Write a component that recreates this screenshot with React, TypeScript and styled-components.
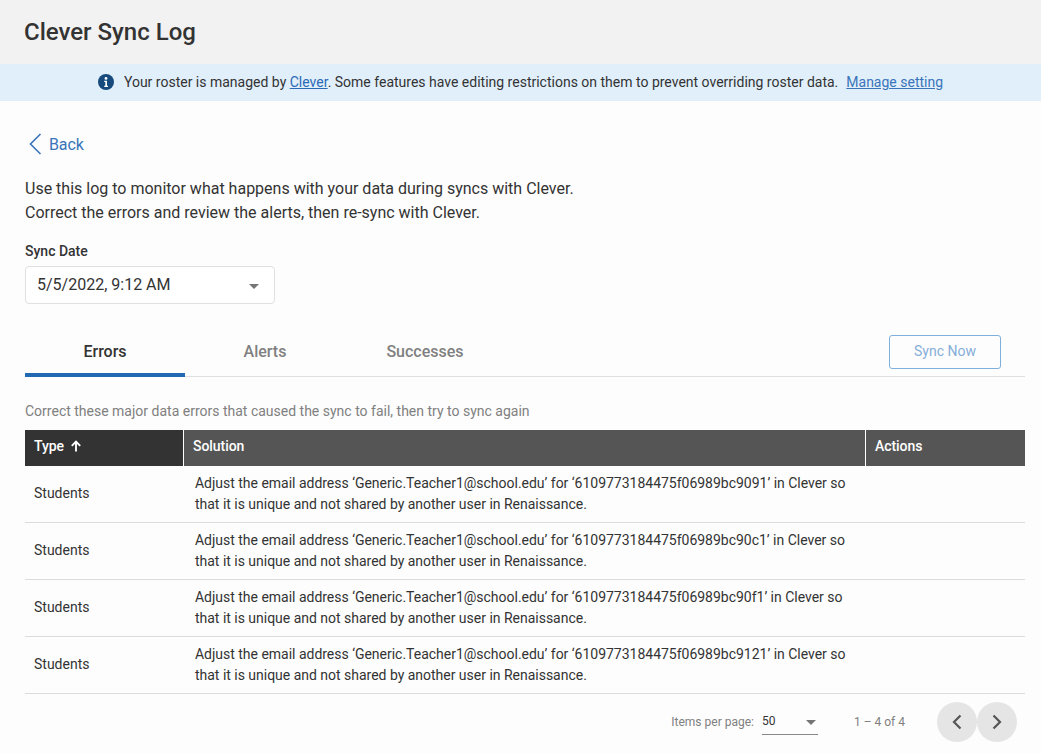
import styled, { createGlobalStyle } from "styled-components";

const GlobalStyle = createGlobalStyle`
  html, body {
    margin: 0;
    padding: 0;
    background: #fdfdfd;
    font-family: Roboto, "Liberation Sans", sans-serif;
    color: #333;
  }
`;

const rows = [
  "6109773184475f06989bc9091",
  "6109773184475f06989bc90c1",
  "6109773184475f06989bc90f1",
  "6109773184475f06989bc9121",
];

const tabs = ["Errors", "Alerts", "Successes"];

const App = () => {
  return (
    <Page>
      <GlobalStyle />
      <Header>
        <Title>Clever Sync Log</Title>
      </Header>
      <Banner>
        <svg width="16" height="16" viewBox="0 0 16 16">
          <circle cx="8" cy="8" r="8" fill="#174a7c" />
          <circle cx="8" cy="4.4" r="1.4" fill="#fff" />
          <path d="M6.2 6.8H9v5h1v1.2H6.2v-1.2h1.1V8H6.2z" fill="#fff" />
        </svg>
        <BannerText>
          Your roster is managed by <a href="#clever">Clever</a>. Some features have editing
          restrictions on them to prevent overriding roster data.
        </BannerText>
        <ManageLink href="#manage">Manage setting</ManageLink>
      </Banner>
      <Content>
        <BackLink href="#back">
          <svg width="14" height="22" viewBox="0 0 14 22" fill="none">
            <path d="M12.5 1 2.5 11l10 10" stroke="#3a74ba" strokeWidth="1.6" />
          </svg>
          Back
        </BackLink>
        <Intro>
          Use this log to monitor what happens with your data during syncs with Clever.
          <br />
          Correct the errors and review the alerts, then re-sync with Clever.
        </Intro>
        <FieldLabel>Sync Date</FieldLabel>
        <Select>
          <SelectValue>5/5/2022, 9:12 AM</SelectValue>
          <Caret />
        </Select>
        <TabBar>
          {tabs.map((tab, index) => (
            <Tab key={tab} $active={index === 0}>
              {tab}
            </Tab>
          ))}
          <SyncButton>Sync Now</SyncButton>
        </TabBar>
        <Caption>Correct these major data errors that caused the sync to fail, then try to sync again</Caption>
        <Table>
          <HeadRow>
            <HeadCell $sorted>
              Type
              <svg width="12" height="12" viewBox="0 0 12 12" fill="none">
                <path d="M6 11.5V2M1.8 5.8 6 1.5l4.2 4.3" stroke="#fff" strokeWidth="1.9" />
              </svg>
            </HeadCell>
            <HeadCell>Solution</HeadCell>
            <HeadCell>Actions</HeadCell>
          </HeadRow>
          {rows.map((id) => (
            <Row key={id}>
              <TypeCell>Students</TypeCell>
              <SolutionCell>
                Adjust the email address ‘Generic.Teacher1@school.edu’ for ‘{id}’ in Clever so
                <br />
                that it is unique and not shared by another user in Renaissance.
              </SolutionCell>
              <div />
            </Row>
          ))}
        </Table>
        <Pagination>
          <PerPageLabel>Items per page:</PerPageLabel>
          <PerPageSelect>
            50
            <Caret />
          </PerPageSelect>
          <Range>1 – 4 of 4</Range>
          <PageButtons>
            <PageButton aria-label="Previous page">
              <svg width="12" height="16" viewBox="0 0 12 16" fill="none">
                <path d="M9.5 1.5 3 8l6.5 6.5" stroke="#555" strokeWidth="2.2" />
              </svg>
            </PageButton>
            <PageButton aria-label="Next page">
              <svg width="12" height="16" viewBox="0 0 12 16" fill="none">
                <path d="M2.5 1.5 9 8l-6.5 6.5" stroke="#555" strokeWidth="2.2" />
              </svg>
            </PageButton>
          </PageButtons>
        </Pagination>
      </Content>
    </Page>
  );
};

export default App;

const Page = styled.div`
  width: 1041px;
  height: 753px;
  overflow: hidden;
  background: #fdfdfd;
`;

const Header = styled.header`
  display: flex;
  align-items: center;
  height: 64px;
  padding-left: 24px;
  background: #f2f2f2;
`;

const Title = styled.h1`
  margin: 0;
  font-size: 24px;
  font-weight: 500;
  color: #333;
`;

const Banner = styled.div`
  box-sizing: border-box;
  display: flex;
  align-items: center;
  justify-content: center;
  height: 37px;
  padding-bottom: 1px;
  background: #e1effb;
  font-size: 14px;

  svg {
    margin-right: 10px;
  }
`;

const BannerText = styled.span`
  color: #333;

  a {
    color: #2a6ab5;
  }
`;

const ManageLink = styled.a`
  margin-left: 8px;
  color: #3a74ba;
`;

const Content = styled.main`
  padding: 29px 16px 0 25px;
`;

const BackLink = styled.a`
  display: flex;
  align-items: center;
  gap: 7px;
  height: 28px;
  padding-left: 3px;
  color: #3a74ba;
  font-size: 16px;
  letter-spacing: -0.1px;
  text-decoration: none;
`;

const Intro = styled.p`
  margin: 19px 0 0;
  font-size: 16px;
  line-height: 24px;
  color: #333;
`;

const FieldLabel = styled.div`
  margin-top: 16px;
  font-size: 14px;
  line-height: 20px;
  font-weight: 500;
  color: #333;
`;

const Select = styled.div`
  box-sizing: border-box;
  display: flex;
  align-items: center;
  justify-content: space-between;
  width: 250px;
  height: 38px;
  margin-top: 5px;
  padding: 0 15px 0 11px;
  border: 1px solid #e0e0e0;
  border-radius: 4px;
  background: #fff;
  font-size: 16px;
  color: #333;
`;

const SelectValue = styled.span`
  margin-bottom: 2px;
`;

const Caret = styled.span`
  width: 0;
  height: 0;
  margin-top: 3px;
  border-left: 5px solid transparent;
  border-right: 5px solid transparent;
  border-top: 5px solid #757575;
`;

const TabBar = styled.div`
  display: flex;
  align-items: stretch;
  height: 72px;
  border-bottom: 1px solid #e0e0e0;
`;

const Tab = styled.div<{ $active?: boolean }>`
  box-sizing: border-box;
  display: flex;
  align-items: flex-end;
  justify-content: center;
  width: 160px;
  padding-bottom: 12px;
  margin-bottom: -1px;
  border-bottom: 4px solid ${({ $active }) => ($active ? "#2269b3" : "transparent")};
  font-size: 16px;
  font-weight: 500;
  color: ${({ $active }) => ($active ? "#333" : "#808080")};
`;

const SyncButton = styled.button`
  align-self: flex-end;
  width: 112px;
  height: 34px;
  margin: 0 24px 7px auto;
  border: 1px solid #7fb0dc;
  border-radius: 3px;
  background: transparent;
  padding: 0 0 3px;
  font-family: inherit;
  font-size: 14px;
  color: #85aed8;
`;

const Caption = styled.p`
  margin: 25px 0 0;
  font-size: 14px;
  line-height: 18px;
  color: #808080;
`;

const Table = styled.div`
  margin-top: 10px;
`;

const HeadRow = styled.div`
  display: grid;
  grid-template-columns: 159px 682px 159px;
  height: 36px;
  background: #555;
`;

const HeadCell = styled.div<{ $sorted?: boolean }>`
  box-sizing: border-box;
  display: flex;
  align-items: center;
  gap: 6px;
  padding: 0 0 4px 9px;
  border-right: 1px solid #fff;
  background: ${({ $sorted }) => ($sorted ? "#333" : "#555")};
  font-size: 14px;
  font-weight: 500;
  letter-spacing: -0.05px;
  color: #fff;

  &:last-child {
    border-right: none;
  }
`;

const Row = styled.div`
  box-sizing: border-box;
  display: grid;
  grid-template-columns: 159px 682px 159px;
  align-items: center;
  height: 57px;
  border-bottom: 1px solid #dcdcdc;
  font-size: 14px;
  color: #333;
`;

const TypeCell = styled.div`
  padding: 0 0 3px 9px;
`;

const SolutionCell = styled.div`
  padding-left: 11px;
  line-height: 21px;
  letter-spacing: -0.015px;
  white-space: nowrap;
`;

const Pagination = styled.div`
  display: flex;
  align-items: center;
  justify-content: flex-end;
  height: 55px;
  padding-right: 8px;
  font-size: 12px;
  color: #808080;
`;

const PerPageLabel = styled.span`
  margin-right: 8px;
`;

const PerPageSelect = styled.div`
  box-sizing: border-box;
  display: flex;
  align-items: center;
  justify-content: space-between;
  width: 56px;
  height: 26px;
  padding-right: 2px;
  border-bottom: 1px solid #888;
  color: #333;
`;

const Range = styled.span`
  margin-left: 36px;
  font-size: 12px;
`;

const PageButtons = styled.div`
  display: flex;
  margin-left: 32px;
`;

const PageButton = styled.button`
  display: flex;
  align-items: center;
  justify-content: center;
  width: 40px;
  height: 40px;
  padding: 0;
  border: none;
  border-radius: 50%;
  background: #e5e5e5;
`;
